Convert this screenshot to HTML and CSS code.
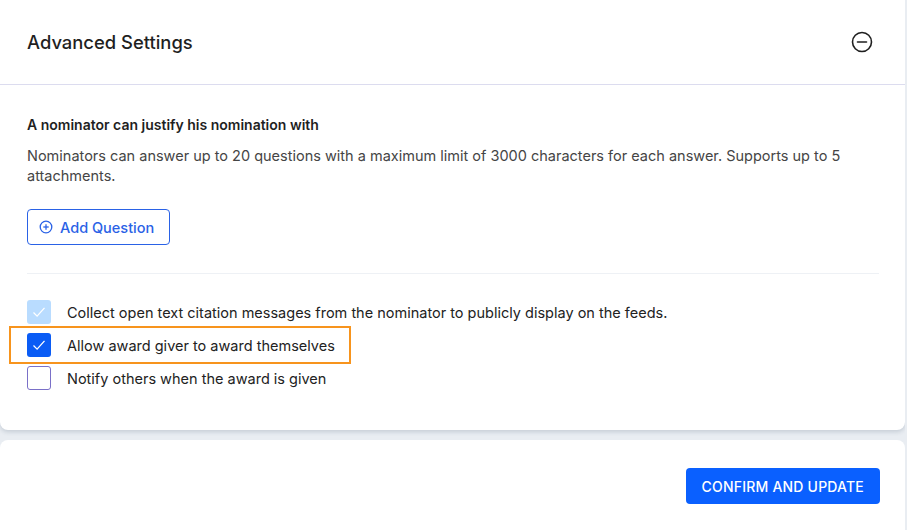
FILE: index.html
```html
<!DOCTYPE html>
<html lang="en">
  <head>
    <meta charset="UTF-8" />
    <meta name="viewport" content="width=device-width, initial-scale=1.0" />
    <title>Advanced Settings</title>
    <link rel="stylesheet" href="styles.css">
  </head>
  <body>
    <div class="settings-card">
      <div class="settings-header">
        <h2 class="settings-title">Advanced Settings</h2>
        <button class="collapse-button" aria-label="Collapse">
          <svg width="22" height="22" viewBox="0 0 22 22" fill="none" stroke="#1f1f1f" stroke-width="1.6">
            <circle cx="11" cy="11" r="9.5" />
            <line x1="6.5" y1="11" x2="15.5" y2="11" stroke-linecap="round" />
          </svg>
        </button>
      </div>

      <div class="settings-body">
        <h3 class="section-title">A nominator can justify his nomination with</h3>
        <p class="section-text">
          Nominators can answer up to 20 questions with a maximum limit of 3000 characters for each answer. Supports up to 5 attachments.
        </p>
        <button class="add-button">
          <svg width="14" height="14" viewBox="0 0 14 14" fill="none" stroke="#2a62e6" stroke-width="1.3">
            <circle cx="7" cy="7" r="5.8" />
            <line x1="7" y1="4.3" x2="7" y2="9.7" />
            <line x1="4.3" y1="7" x2="9.7" y2="7" />
          </svg>
          Add Question
        </button>

        <div class="divider"></div>

        <!-- 체크박스 목록 -->
        <div class="option-list">
          <div class="option">
            <span class="checkbox checkbox-disabled">
              <svg width="16" height="16" viewBox="0 0 16 16" fill="none" stroke="#fff" stroke-width="1.3"><path d="M2.5 8.5l3.6 3.6 7.4-8.2" /></svg>
            </span>
            <span class="option-label">Collect open text citation messages from the nominator to publicly display on the feeds.</span>
          </div>
          <div class="option option-focused">
            <span class="checkbox checkbox-checked">
              <svg width="16" height="16" viewBox="0 0 16 16" fill="none" stroke="#fff" stroke-width="1.3"><path d="M2.5 8.5l3.6 3.6 7.4-8.2" /></svg>
            </span>
            <span class="option-label">Allow award giver to award themselves</span>
          </div>
          <div class="option">
            <span class="checkbox"></span>
            <span class="option-label">Notify others when the award is given</span>
          </div>
        </div>
      </div>
    </div>

    <div class="footer-card">
      <button class="confirm-button">CONFIRM AND UPDATE</button>
    </div>
  </body>
</html>
```

FILE: styles.css
```css
* {
  margin: 0;
  padding: 0;
  box-sizing: border-box;
}

body {
  font-family: Inter, "Liberation Sans", sans-serif;
  background-color: #e9edf2;
  color: #1f1f1f;
  width: 905px;
  height: 530px;
  overflow: hidden;
}

button {
  font-family: inherit;
  background: none;
  border: none;
  cursor: pointer;
}

.settings-card {
  background-color: #fff;
  border-radius: 0 0 8px 8px;
  box-shadow: 0 2px 4px rgba(40, 60, 90, 0.18);
  height: 430px;
}

.settings-header {
  display: flex;
  align-items: center;
  justify-content: space-between;
  height: 85px;
  padding: 0 32px 0 27px;
  border-bottom: 1px solid #dcdcef;
}

.settings-title {
  font-size: 18.4px;
  font-weight: 500;
  color: #1f1f1f;
  padding-bottom: 1px;
}

.collapse-button {
  display: flex;
  width: 22px;
  height: 22px;
}

.settings-body {
  padding: 32px 26px 0 27px;
}

.section-title {
  font-size: 14px;
  font-weight: 600;
  color: #1f1f1f;
  line-height: 16px;
}

.section-text {
  margin-top: 13px;
  font-size: 14.5px;
  line-height: 20px;
  color: #454545;
}

.add-button {
  margin-top: 23px;
  display: flex;
  align-items: center;
  gap: 7px;
  height: 36px;
  padding: 0 15px 0 11px;
  border: 1px solid #2a62e6;
  border-radius: 4px;
  color: #2a62e6;
  font-size: 14.5px;
  font-weight: 500;
}

.divider {
  margin-top: 28px;
  border-top: 1px solid #eef1f5;
}

.option-list {
  margin-top: 26px;
  display: flex;
  flex-direction: column;
  gap: 9px;
}

.option {
  display: flex;
  align-items: center;
  gap: 16px;
  height: 24px;
  font-size: 14.5px;
  color: #222;
}

.option-focused {
  outline: 2px solid #f7941d;
  outline-offset: 5px;
  margin-left: -11px;
  padding-left: 11px;
  width: 328px;
}

.checkbox {
  display: flex;
  align-items: center;
  justify-content: center;
  width: 24px;
  height: 24px;
  flex-shrink: 0;
  border: 1.5px solid #7a70c8;
  border-radius: 3px;
  background-color: #fff;
}

.checkbox-disabled {
  border: none;
  background-color: #b9dcff;
}

.checkbox-checked {
  border: none;
  background-color: #0a5cf5;
}

.footer-card {
  margin-top: 10px;
  background-color: #fff;
  border-radius: 8px 8px 0 0;
  height: 90px;
  display: flex;
  justify-content: flex-end;
  align-items: flex-start;
  padding: 28px 25px 0 0;
}

.confirm-button {
  height: 36px;
  padding: 0 16px;
  background-color: #0a60ff;
  color: #fff;
  font-size: 14px;
  font-weight: 500;
  letter-spacing: 0.2px;
  border-radius: 4px;
}
```
